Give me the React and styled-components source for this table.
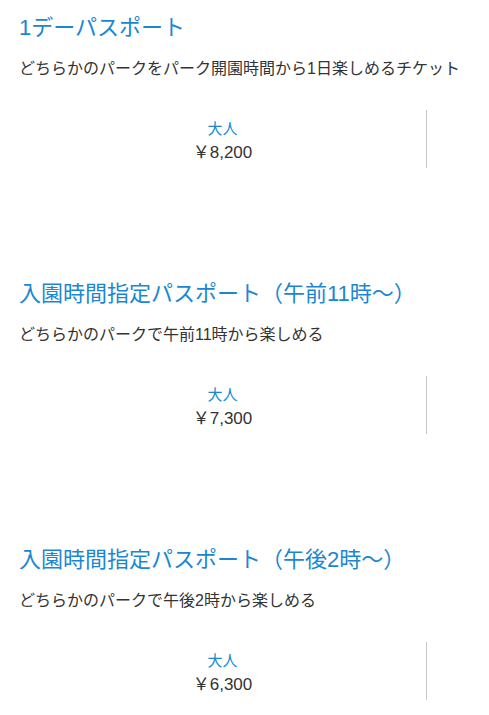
import React from "react";
import styled, { createGlobalStyle } from "styled-components";

const GlobalStyle = createGlobalStyle`
  html, body { margin: 0; padding: 0; background: #fff; }
  body {
    font-family: "Liberation Sans", "Noto Sans CJK JP", sans-serif;
    -webkit-font-smoothing: antialiased;
  }
`;

const Page = styled.div`
  display: flex;
  flex-direction: column;
  gap: 111px;
  padding: 13px 0 40px;
`;

const Section = styled.section`
  display: flex;
  flex-direction: column;
  padding: 0 19px;
`;

const Title = styled.h2`
  margin: 0;
  height: 30px;
  font-size: 22px;
  line-height: 30px;
  font-weight: 400;
  color: #1b87d2;
  white-space: nowrap;
`;

const Description = styled.p`
  margin: 14px 0 0;
  height: 24px;
  font-size: 16px;
  line-height: 24px;
  color: #333;
  white-space: nowrap;
`;

const PriceRow = styled.div`
  display: flex;
  margin-top: 29px;
`;

const PriceCell = styled.div`
  width: 408px;
  height: 58px;
  box-sizing: border-box;
  border-right: 1px solid #c9c9c9;
  display: flex;
  flex-direction: column;
  align-items: center;
  padding-top: 9px;
`;

const Label = styled.span`
  height: 20px;
  font-size: 15px;
  line-height: 20px;
  color: #1b87d2;
`;

const Price = styled.span`
  height: 28px;
  font-size: 17px;
  line-height: 28px;
  color: #333;
`;

const tickets = [
  {
    title: "1デーパスポート",
    desc: "どちらかのパークをパーク開園時間から1日楽しめるチケット",
    price: "￥8,200",
  },
  {
    title: "入園時間指定パスポート（午前11時〜）",
    desc: "どちらかのパークで午前11時から楽しめる",
    price: "￥7,300",
  },
  {
    title: "入園時間指定パスポート（午後2時〜）",
    desc: "どちらかのパークで午後2時から楽しめる",
    price: "￥6,300",
  },
];

export default function App() {
  return (
    <>
      <GlobalStyle />
      <Page>
        {tickets.map((t) => (
          <Section key={t.title}>
            <Title>{t.title}</Title>
            <Description>{t.desc}</Description>
            <PriceRow>
              <PriceCell>
                <Label>大人</Label>
                <Price>{t.price}</Price>
              </PriceCell>
            </PriceRow>
          </Section>
        ))}
      </Page>
    </>
  );
}
